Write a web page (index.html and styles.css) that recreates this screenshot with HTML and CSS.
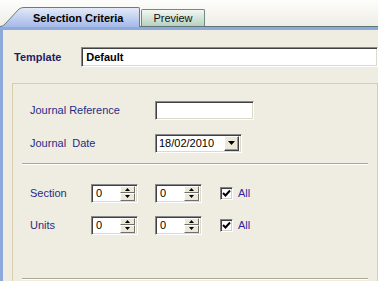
FILE: index.html
```html
<!DOCTYPE html>
<html lang="en">
<head>
  <meta charset="UTF-8" />
  <title>Selection Criteria</title>
  <link rel="stylesheet" href="styles.css">
</head>
<body>

  <!-- Tab strip -->
  <div class="tabs">
    <div class="tab active">
      <svg class="slant" width="24" height="20" viewBox="0 0 24 20">
        <defs>
          <linearGradient id="tabfill" x1="0" y1="0" x2="0" y2="1">
            <stop offset="0" stop-color="#e4eaf8" />
            <stop offset="1" stop-color="#a3b9e8" />
          </linearGradient>
        </defs>
        <path d="M0,20 L0,19.5 Q3,19.5 5,17 L19,2 Q21,0.5 24,0.5 L24,20 Z" fill="url(#tabfill)" />
        <path d="M0,19.5 Q3,19.5 5,17 L19,2 Q21,0.5 24,0.5" fill="none" stroke="#6a7c80" stroke-width="1" />
      </svg>
      <span class="tab-label">Selection Criteria</span>
    </div>
    <div class="tab other">Preview</div>
  </div>

  <div class="panel">
    <div class="template-row">
      <span class="template-label">Template</span>
      <div class="field template-input">Default</div>
    </div>

    <div class="group">
      <div class="row">
        <span class="lbl wide">Journal Reference</span>
        <div class="field ref-input"></div>
      </div>
      <div class="row gap-13">
        <span class="lbl wide">Journal&nbsp; Date</span>
        <div class="field combo">
          <span class="combo-text">18/02/2010</span>
          <span class="drop-btn">
            <svg width="7" height="4" viewBox="0 0 7 4"><path d="M0,0 H7 L3.5,4 Z" fill="#000" /></svg>
          </span>
        </div>
      </div>

      <div class="sep"></div>

      <div class="row first-spin">
        <span class="lbl narrow">Section</span>
        <div class="field spin">
          <span class="spin-text">0</span>
          <span class="spin-btns">
            <span class="spin-up"><svg width="5" height="3" viewBox="0 0 5 3"><path d="M2.5,0 L5,3 H0 Z" fill="#000" /></svg></span>
            <span class="spin-down"><svg width="5" height="3" viewBox="0 0 5 3"><path d="M0,0 H5 L2.5,3 Z" fill="#000" /></svg></span>
          </span>
        </div>
        <div class="field spin second">
          <span class="spin-text">0</span>
          <span class="spin-btns">
            <span class="spin-up"><svg width="5" height="3" viewBox="0 0 5 3"><path d="M2.5,0 L5,3 H0 Z" fill="#000" /></svg></span>
            <span class="spin-down"><svg width="5" height="3" viewBox="0 0 5 3"><path d="M0,0 H5 L2.5,3 Z" fill="#000" /></svg></span>
          </span>
        </div>
        <span class="check">
          <svg width="9" height="9" viewBox="0 0 9 9"><path d="M1,4 L3.5,6.5 L8,1.5" fill="none" stroke="#000" stroke-width="2" /></svg>
        </span>
        <span class="lbl all">All</span>
      </div>

      <div class="row gap-12">
        <span class="lbl narrow">Units</span>
        <div class="field spin">
          <span class="spin-text">0</span>
          <span class="spin-btns">
            <span class="spin-up"><svg width="5" height="3" viewBox="0 0 5 3"><path d="M2.5,0 L5,3 H0 Z" fill="#000" /></svg></span>
            <span class="spin-down"><svg width="5" height="3" viewBox="0 0 5 3"><path d="M0,0 H5 L2.5,3 Z" fill="#000" /></svg></span>
          </span>
        </div>
        <div class="field spin second">
          <span class="spin-text">0</span>
          <span class="spin-btns">
            <span class="spin-up"><svg width="5" height="3" viewBox="0 0 5 3"><path d="M2.5,0 L5,3 H0 Z" fill="#000" /></svg></span>
            <span class="spin-down"><svg width="5" height="3" viewBox="0 0 5 3"><path d="M0,0 H5 L2.5,3 Z" fill="#000" /></svg></span>
          </span>
        </div>
        <span class="check">
          <svg width="9" height="9" viewBox="0 0 9 9"><path d="M1,4 L3.5,6.5 L8,1.5" fill="none" stroke="#000" stroke-width="2" /></svg>
        </span>
        <span class="lbl all">All</span>
      </div>

      <div class="sep bottom"></div>
    </div>
  </div>

</body>
</html>
```

FILE: styles.css
```css
* { margin: 0; padding: 0; box-sizing: border-box; }
html, body {
  width: 378px;
  height: 281px;
  overflow: hidden;
}
body {
  font-family: "Liberation Sans", Arial, sans-serif;
  font-size: 11px;
  background: #efede2;
  display: flex;
  flex-direction: column;
}

/* Tabs */
.tabs {
  height: 27px;
  flex: none;
  display: flex;
  align-items: flex-end;
  background:
    linear-gradient(#5f7676, #5f7676) bottom / 100% 1px no-repeat,
    linear-gradient(#fdfdfb, #eeede6);
}
.tab.active {
  display: flex;
  align-items: flex-end;
  height: 20px;
}
.tab.active .slant { display: block; }
.tab-label {
  height: 20px;
  width: 116px;
  padding-left: 9px;
  display: flex;
  align-items: center;
  font-weight: bold;
  color: #000;
  background: linear-gradient(#e4eaf8, #a3b9e8);
  border-top: 1px solid #6a7c80;
  border-right: 1px solid #6a7c80;
  border-top-right-radius: 2px;
}
.tab.other {
  width: 64px;
  height: 17px;
  margin-left: 1px;
  margin-bottom: 1px;
  display: flex;
  align-items: center;
  justify-content: center;
  color: #111;
  background: linear-gradient(#f3f7f2, #b6d1c0);
  border: 1px solid #6d8c80;
  border-bottom: none;
  border-radius: 2px 2px 0 0;
}

/* Panel */
.panel {
  flex: 1;
  min-height: 0;
  overflow: hidden;
  display: flex;
  flex-direction: column;
  border-top: 3px solid #8ea9dc;
  border-left: 3px solid #8ea9dc;
  padding: 17px 0 0 9px;
}
.template-row {
  display: flex;
  align-items: center;
  height: 20px;
  flex: none;
}
.template-label {
  width: 70px;
  padding-left: 2px;
  font-weight: bold;
  color: #1c1c66;
}
.field {
  background: #fff;
  border-top: 1px solid #8a8a8a;
  border-left: 1px solid #8a8a8a;
  border-bottom: 1px solid #fff;
  border-right: 1px solid #fff;
  box-shadow: inset 1px 1px 0 #404040, inset -1px -1px 0 #dcd9cc;
}
.template-input {
  width: 300px;
  height: 20px;
  padding-left: 4px;
  display: flex;
  align-items: center;
  font-weight: bold;
  color: #000;
}

.group {
  flex: 1;
  margin-top: 16px;
  width: 366px;
  border: 1px solid #d6cfa8;
  border-bottom: none;
  padding: 16px 9px 0 17px;
}
.row {
  display: flex;
  align-items: center;
  height: 20px;
}
.gap-13 { margin-top: 13px; }
.gap-12 { margin-top: 12px; }
.lbl { color: #1f2c86; }
.lbl.wide { width: 125px; }
.lbl.narrow { width: 61px; }
.ref-input {
  width: 99px;
  height: 19px;
}
.combo {
  width: 87px;
  height: 19px;
  display: flex;
  align-items: center;
  justify-content: space-between;
  padding: 0 2px 0 3px;
  color: #000;
}
.drop-btn {
  width: 15px;
  height: 15px;
  display: flex;
  align-items: center;
  justify-content: center;
  background: #ece9d8;
  border-top: 1px solid #fff;
  border-left: 1px solid #fff;
  border-right: 1px solid #404040;
  border-bottom: 1px solid #404040;
  box-shadow: inset -1px -1px 0 #9c9a90;
}

.sep {
  margin: 10px 0 0 -8px;
  height: 2px;
  border-top: 1px solid #aca893;
  border-bottom: 1px solid #fff;
}
.sep.bottom { margin-top: 43px; }
.first-spin { margin-top: 18px; }

.spin {
  width: 47px;
  height: 19px;
  display: flex;
  align-items: center;
  justify-content: space-between;
  padding: 0 2px 0 4px;
  color: #000;
}
.spin.second { margin-left: 17px; }
.spin-btns {
  display: flex;
  flex-direction: column;
  width: 15px;
  height: 15px;
}
.spin-up, .spin-down {
  flex: 1;
  display: flex;
  align-items: center;
  justify-content: center;
  background: #ece9d8;
  border-top: 1px solid #fff;
  border-left: 1px solid #fff;
  border-right: 1px solid #6f6f6f;
  border-bottom: 1px solid #6f6f6f;
}
.check {
  margin-left: 18px;
  width: 13px;
  height: 13px;
  display: flex;
  align-items: center;
  justify-content: center;
  background: #fff;
  border-top: 1px solid #808080;
  border-left: 1px solid #808080;
  border-bottom: 1px solid #fff;
  border-right: 1px solid #fff;
  box-shadow: inset 1px 1px 0 #404040, inset -1px -1px 0 #d4d0c8;
}
.lbl.all { margin-left: 5px; color: #2a2aa0; }
```
